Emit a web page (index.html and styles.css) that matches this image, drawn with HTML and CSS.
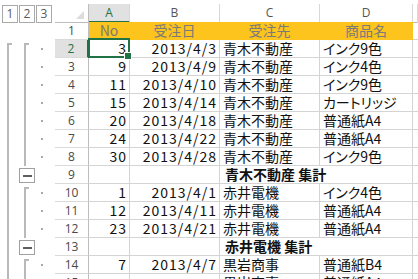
FILE: index.html
```html
<!DOCTYPE html>
<html>
  <head>
  <meta charset="UTF-8">
  <meta name="viewport" content="width=device-width,initial-scale=1.0">
  <link rel="stylesheet" href="styles.css">
  </head>
  <body>
    <div class="sheet">
      <div class="row head">
        <div class="gutter btns">
          <span class="lvl_btn">1</span><span class="lvl_btn">2</span><span class="lvl_btn">3</span>
        </div>
        <div class="rh corner"><span class="tri"></span></div>
        <div class="ch sel">A</div>
        <div class="ch">B</div>
        <div class="ch">C</div>
        <div class="ch">D</div>
        <div class="ch"></div>
      </div>

      <div class="row">
        <div class="gutter"><span></span><span></span><span></span></div>
        <div class="rh">1</div>
        <div class="cell title">No</div>
        <div class="cell title">受注日</div>
        <div class="cell title">受注先</div>
        <div class="cell title">商品名</div>
        <div class="cell"></div>
      </div>

      <div class="row">
        <div class="gutter"><span><i class="ln top"></i></span><span><i class="ln top"></i></span><span><i class="dot"></i></span></div>
        <div class="rh sel">2</div>
        <div class="cell num active">3</div>
        <div class="cell num">2013/4/3</div>
        <div class="cell">青木不動産</div>
        <div class="cell">インク9色</div>
        <div class="cell"></div>
      </div>
      <div class="row">
        <div class="gutter"><span><i class="ln"></i></span><span><i class="ln"></i></span><span><i class="dot"></i></span></div>
        <div class="rh">3</div>
        <div class="cell num">9</div>
        <div class="cell num">2013/4/9</div>
        <div class="cell">青木不動産</div>
        <div class="cell">インク4色</div>
        <div class="cell"></div>
      </div>
      <div class="row">
        <div class="gutter"><span><i class="ln"></i></span><span><i class="ln"></i></span><span><i class="dot"></i></span></div>
        <div class="rh">4</div>
        <div class="cell num">11</div>
        <div class="cell num">2013/4/10</div>
        <div class="cell">青木不動産</div>
        <div class="cell">インク9色</div>
        <div class="cell"></div>
      </div>
      <div class="row">
        <div class="gutter"><span><i class="ln"></i></span><span><i class="ln"></i></span><span><i class="dot"></i></span></div>
        <div class="rh">5</div>
        <div class="cell num">15</div>
        <div class="cell num">2013/4/14</div>
        <div class="cell">青木不動産</div>
        <div class="cell">カートリッジ</div>
        <div class="cell"></div>
      </div>
      <div class="row">
        <div class="gutter"><span><i class="ln"></i></span><span><i class="ln"></i></span><span><i class="dot"></i></span></div>
        <div class="rh">6</div>
        <div class="cell num">20</div>
        <div class="cell num">2013/4/18</div>
        <div class="cell">青木不動産</div>
        <div class="cell">普通紙A4</div>
        <div class="cell"></div>
      </div>
      <div class="row">
        <div class="gutter"><span><i class="ln"></i></span><span><i class="ln"></i></span><span><i class="dot"></i></span></div>
        <div class="rh">7</div>
        <div class="cell num">24</div>
        <div class="cell num">2013/4/22</div>
        <div class="cell">青木不動産</div>
        <div class="cell">普通紙A4</div>
        <div class="cell"></div>
      </div>
      <div class="row">
        <div class="gutter"><span><i class="ln"></i></span><span><i class="ln"></i></span><span><i class="dot"></i></span></div>
        <div class="rh">8</div>
        <div class="cell num">30</div>
        <div class="cell num">2013/4/28</div>
        <div class="cell">青木不動産</div>
        <div class="cell">インク9色</div>
        <div class="cell"></div>
      </div>
      <div class="row">
        <div class="gutter"><span><i class="ln"></i></span><span><i class="box"></i></span><span></span></div>
        <div class="rh">9</div>
        <div class="cell"></div>
        <div class="cell"></div>
        <div class="cell total">青木不動産 集計</div>
        <div class="cell"></div>
        <div class="cell"></div>
      </div>

      <div class="row">
        <div class="gutter"><span><i class="ln"></i></span><span><i class="ln top"></i></span><span><i class="dot"></i></span></div>
        <div class="rh">10</div>
        <div class="cell num">1</div>
        <div class="cell num">2013/4/1</div>
        <div class="cell">赤井電機</div>
        <div class="cell">インク4色</div>
        <div class="cell"></div>
      </div>
      <div class="row">
        <div class="gutter"><span><i class="ln"></i></span><span><i class="ln"></i></span><span><i class="dot"></i></span></div>
        <div class="rh">11</div>
        <div class="cell num">12</div>
        <div class="cell num">2013/4/11</div>
        <div class="cell">赤井電機</div>
        <div class="cell">普通紙A4</div>
        <div class="cell"></div>
      </div>
      <div class="row">
        <div class="gutter"><span><i class="ln"></i></span><span><i class="ln"></i></span><span><i class="dot"></i></span></div>
        <div class="rh">12</div>
        <div class="cell num">23</div>
        <div class="cell num">2013/4/21</div>
        <div class="cell">赤井電機</div>
        <div class="cell">普通紙A4</div>
        <div class="cell"></div>
      </div>
      <div class="row">
        <div class="gutter"><span><i class="ln"></i></span><span><i class="box"></i></span><span></span></div>
        <div class="rh">13</div>
        <div class="cell"></div>
        <div class="cell"></div>
        <div class="cell total">赤井電機 集計</div>
        <div class="cell"></div>
        <div class="cell"></div>
      </div>

      <div class="row">
        <div class="gutter"><span><i class="ln"></i></span><span><i class="ln top"></i></span><span><i class="dot"></i></span></div>
        <div class="rh">14</div>
        <div class="cell num">7</div>
        <div class="cell num">2013/4/7</div>
        <div class="cell">黒岩商事</div>
        <div class="cell">普通紙B4</div>
        <div class="cell"></div>
      </div>
      <div class="row">
        <div class="gutter"><span><i class="ln"></i></span><span><i class="ln"></i></span><span><i class="dot"></i></span></div>
        <div class="rh">15</div>
        <div class="cell num"></div>
        <div class="cell num"></div>
        <div class="cell">黒岩商事</div>
        <div class="cell">普通紙A4</div>
        <div class="cell"></div>
      </div>
    </div>
  </body>
</html>
```

FILE: styles.css
```css
*{
  margin:0;
  padding:0;
  box-sizing:border-box;
}
body{
  background-color:#ffffff;
  font-family:"Noto Sans CJK JP","Noto Sans",sans-serif;
}
.sheet{
  width:418px;
  height:279px;
  overflow:hidden;
  padding-top:4px;
}
.row{
  display:grid;
  grid-template-columns:55px 34px 41px 90px 100px 93px 1fr;
  height:18px;
}

/* outline gutter */
.gutter{
  display:grid;
  grid-template-columns:17px 17px 17px;
  padding-left:2px;
}
.gutter>span{
  display:block;
  height:18px;
}
.gutter.btns{
  padding-top:1px;
}
.lvl_btn{
  display:block;
  width:16px;
  height:17px;
  border:1px solid #a9a9a9;
  font-family:"Open Sans",sans-serif;
  font-size:12px;
  line-height:15px;
  text-align:center;
  color:#5a5a5a;
}
.ln{
  display:block;
  margin-left:5px;
  height:18px;
  width:5px;
  border-left:2px solid #b9b9b9;
}
.ln.top{
  margin-top:3px;
  height:15px;
  border-top:2px solid #b9b9b9;
}
.box{
  display:flex;
  align-items:center;
  justify-content:center;
  margin-top:2px;
  width:16px;
  height:15px;
  border:1px solid #a0a0a0;
}
.box::before{
  content:"";
  display:block;
  width:9px;
  height:2px;
  background-color:#5e5e5e;
}
.dot{
  display:block;
  width:2px;
  height:2px;
  margin:8px 0 0 5px;
  background-color:#a8a8a8;
}

/* headers */
.rh{
  font-family:"Open Sans",sans-serif;
  font-size:12px;
  line-height:17px;
  text-align:center;
  color:#4a4a4a;
  border-right:1px solid #bdbdbd;
  border-bottom:1px solid #dadada;
}
.rh.sel{
  background-color:#e1e1e1;
  color:#217346;
  border-right:2px solid #217346;
}
.rh.corner{
  display:flex;
  align-items:flex-end;
  justify-content:flex-end;
  padding:0 4px 3px 0;
  border-bottom:1px solid #bdbdbd;
}
.tri{
  width:0;
  height:0;
  border-left:8px solid transparent;
  border-bottom:8px solid #dcdcdc;
}
.ch{
  font-family:"Open Sans",sans-serif;
  font-size:12px;
  line-height:17px;
  text-align:center;
  color:#555555;
  border-right:1px solid #d8d8d8;
  border-bottom:1px solid #bdbdbd;
}
.ch.sel{
  background-color:#e1e1e1;
  color:#217346;
  border-bottom:2px solid #217346;
}

/* cells */
.cell{
  font-size:14px;
  line-height:17px;
  padding:0 3px;
  white-space:nowrap;
  color:#111111;
  font-feature-settings:"palt";
  border-right:1px solid #d4d4d4;
  border-bottom:1px solid #d4d4d4;
}
.num{
  text-align:right;
  letter-spacing:1px;
  padding-right:2px;
}
.title{
  background-color:#fcc41d;
  color:#7a7a7a;
  text-align:center;
  border-right-color:#fcc41d;
  border-bottom-color:#fcc41d;
}
.total{
  font-weight:bold;
  overflow:visible;
  padding-left:5px;
  border-right:none;
}
.active{
  position:relative;
}
.active::before{
  content:"";
  position:absolute;
  left:-1px;
  top:-2px;
  right:-1px;
  bottom:-1px;
  border:2px solid #217346;
}
.active::after{
  content:"";
  position:absolute;
  right:-3px;
  bottom:-3px;
  width:6px;
  height:6px;
  background-color:#217346;
  border:1px solid #ffffff;
}
```
